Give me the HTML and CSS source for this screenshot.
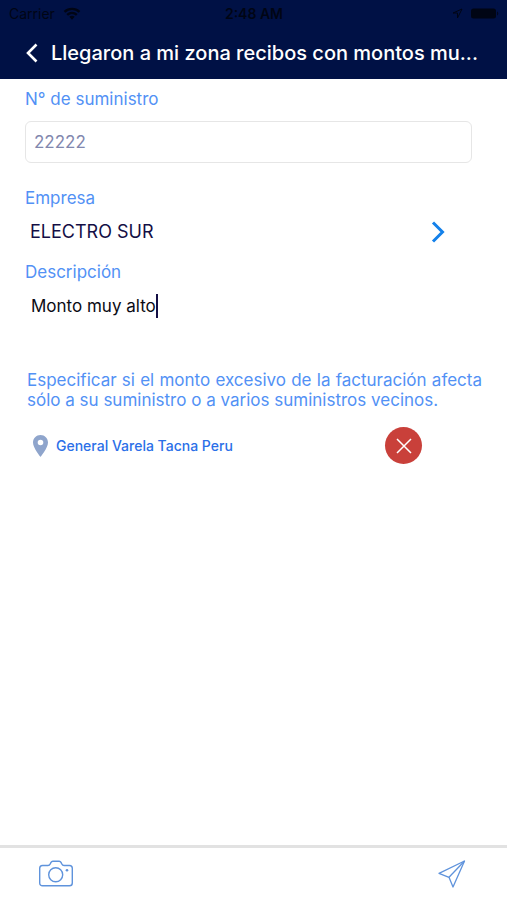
FILE: index.html
```html
<!DOCTYPE html>
<html lang="es">
<head>
    <meta charset="UTF-8">
    <meta name="viewport" content="width=device-width, initial-scale=1.0">
    <title>Reporte</title>
    <link rel="stylesheet" href="styles.css">
</head>
<body>
    <header class="header">
        <div class="status-bar">
            <div class="status-left">
                <span>Carrier</span>
                <svg width="18" height="13" viewBox="0 0 18 13" fill="none" stroke="currentColor" stroke-width="2.4">
                    <path d="M1.5 4.8C5.8.9 12.2.9 16.5 4.8"/>
                    <path d="M4.2 7.800c2.800-2.500 6.800-2.500 9.600 0"/>
                    <path d="M6.300 9.700L9 12.700l2.700-3c-1.500-1.300-3.900-1.300-5.400 0z" fill="currentColor" stroke="none"/>
                </svg>
            </div>
            <span class="status-time">2:48 AM</span>
            <div class="status-right">
                <svg width="11" height="11" viewBox="0 0 11 11" fill="none" stroke="currentColor">
                    <path d="M10 1L1 5h4.500v5z"/>
                </svg>
                <svg width="28" height="11" viewBox="0 0 28 11" fill="currentColor">
                    <rect x="0" y="0.500" width="25" height="10" rx="2.500"/>
                    <path d="M26.200 3.500c1.400.7 1.400 3.300 0 4z"/>
                </svg>
            </div>
        </div>
        <div class="nav-bar">
            <button class="back" type="button" aria-label="Volver">
                <svg width="14" height="20" viewBox="0 0 14 20" fill="none" stroke="currentColor" stroke-width="2.600">
                    <path d="M11.500 1.500L3 10l8.500 8.500"/>
                </svg>
            </button>
            <h1>Llegaron a mi zona recibos con montos mu...</h1>
        </div>
    </header>

    <main class="content">
        <form class="report" id="report">
            <label for="suministro">N° de suministro</label>
            <input class="supply" type="text" id="suministro" value="22222">

            <label for="empresa">Empresa</label>
            <div class="company">
                <select id="empresa">
                    <option>ELECTRO SUR</option>
                </select>
                <svg width="14" height="22" viewBox="0 0 14 22" fill="none" stroke="currentColor" stroke-width="3">
                    <path d="M2 1.500L11.500 11 2 20.500"/>
                </svg>
            </div>

            <label for="descripcion">Descripción</label>
            <div class="description">
                <textarea id="descripcion" rows="1">Monto muy alto</textarea>
                <span class="caret"></span>
            </div>
        </form>

        <p class="hint">Especificar si el monto excesivo de la facturación afecta sólo a su suministro o a varios suministros vecinos.</p>

        <div class="location">
            <svg width="15" height="22" viewBox="0 0 15 22" fill="#8fa5cc">
                <path fill-rule="evenodd" d="M7.500 0C3.300 0 0 3.300 0 7.500 0 12.800 7.500 22 7.500 22S15 12.800 15 7.500C15 3.300 11.700 0 7.500 0zm0 4.700a2.800 2.800 0 1 1 0 5.600 2.800 2.800 0 0 1 0-5.600z"/>
            </svg>
            <span class="address">General Varela Tacna Peru</span>
            <button class="remove" type="button" aria-label="Quitar ubicación">
                <svg width="16" height="16" viewBox="0 0 16 16" fill="none" stroke="currentColor" stroke-width="1.500">
                    <path d="M1 1l14 14M15 1L1 15"/>
                </svg>
            </button>
        </div>
    </main>

    <footer class="toolbar">
        <button type="button" aria-label="Tomar foto">
            <svg width="36" height="28" viewBox="0 0 36 28" fill="none" stroke="currentColor" stroke-width="1.400">
                <path d="M4.500 5.500H10c1.200 0 1.700-.5 2.200-1.500l.8-1.600c.4-.8.9-1.200 1.800-1.200h6.400c.9 0 1.400.4 1.800 1.200l.8 1.600c.5 1 1 1.500 2.200 1.500h5.500c1.700 0 2.800 1.100 2.800 2.800v14.700c0 1.700-1.100 2.800-2.800 2.800h-27c-1.700 0-2.800-1.100-2.800-2.800V8.300c0-1.700 1.100-2.800 2.800-2.800z"/>
                <circle cx="17.700" cy="14.800" r="7"/>
                <circle cx="29" cy="10.200" r="1.300" fill="currentColor" stroke="none"/>
            </svg>
        </button>
        <button type="submit" form="report" aria-label="Enviar">
            <svg width="28" height="28" viewBox="0 0 28 28" fill="none" stroke="currentColor" stroke-width="1.300" stroke-linejoin="round">
                <path d="M26.500 1L1 13.300l10 4L15 27z"/>
                <path d="M26.500 1L11 17.300"/>
            </svg>
        </button>
    </footer>
</body>
</html>
```
FILE: styles.css
```css
* {
    box-sizing: border-box;
}
body {
    display: flex;
    flex-direction: column;
    min-height: 100vh;
    margin: 0;
    background: #fff;
    color: #5291f5;
    font-family: Inter, "Liberation Sans", sans-serif;
    font-size: 17px;
    line-height: 20px;
}
button, input, select, textarea {
    margin: 0;
    padding: 0;
    border: none;
    background: none;
    font: inherit;
    color: inherit;
}
button {
    display: flex;
    align-items: center;
    justify-content: center;
    cursor: pointer;
}
svg {
    display: block;
    flex-shrink: 0;
}
.header {
    background: #001145;
}
.status-bar {
    display: grid;
    grid-template-columns: 1fr auto 1fr;
    align-items: center;
    height: 27px;
    padding: 0 8px 0 9px;
    color: #000514;
    font-size: 14px;
}
.status-left, .status-right {
    display: flex;
    align-items: center;
    gap: 8px;
}
.status-right {
    justify-content: flex-end;
}
.status-time {
    font-weight: 600;
}
.nav-bar {
    display: flex;
    align-items: center;
    gap: 12px;
    height: 52px;
    padding: 0 20px 0 25px;
    color: #fff;
}
.nav-bar h1 {
    margin: 0;
    font-size: 20px;
    font-weight: 500;
    line-height: 24px;
    white-space: nowrap;
}
.content {
    flex: 1;
    padding: 10px 25px;
}
.report label {
    display: block;
}
.supply {
    display: block;
    width: calc(100% - 10px);
    height: 42px;
    margin: 12px 0 25px;
    padding: 0 8px;
    border: 1px solid #e6e6e6;
    border-radius: 6px;
    color: #8187ae;
}
.company {
    display: flex;
    align-items: center;
    height: 28px;
    margin: 10px 0 16px;
    padding: 0 37px 0 5px;
    color: #1481ea;
}
.company select {
    flex: 1;
    appearance: none;
    color: #140f45;
    font-size: 18px;
    line-height: 28px;
}
.description {
    display: flex;
    height: 76px;
    margin-top: 12px;
    padding: 0 6px;
}
.description textarea {
    field-sizing: content;
    height: 24px;
    resize: none;
    outline: none;
    overflow: hidden;
    color: #0b0b14;
    line-height: 24px;
    white-space: pre;
}
.caret {
    width: 2px;
    height: 24px;
    background: #140f45;
}
.hint {
    margin: 0 0 17px;
    padding-left: 2px;
    text-align: justify;
}
.location {
    display: flex;
    align-items: center;
    padding: 0 60px 0 8px;
    color: #2b6fe8;
    font-size: 14px;
}
.address {
    flex: 1;
    padding-left: 8px;
    font-weight: 500;
}
.remove {
    width: 37px;
    height: 37px;
    border-radius: 50%;
    background: #c9403a;
    color: #fff;
}
.toolbar {
    display: flex;
    align-items: center;
    justify-content: space-between;
    height: 55px;
    padding: 0 41px 0 38px;
    border-top: 3px solid #e2e2e2;
    color: #5f93dc;
}
```
